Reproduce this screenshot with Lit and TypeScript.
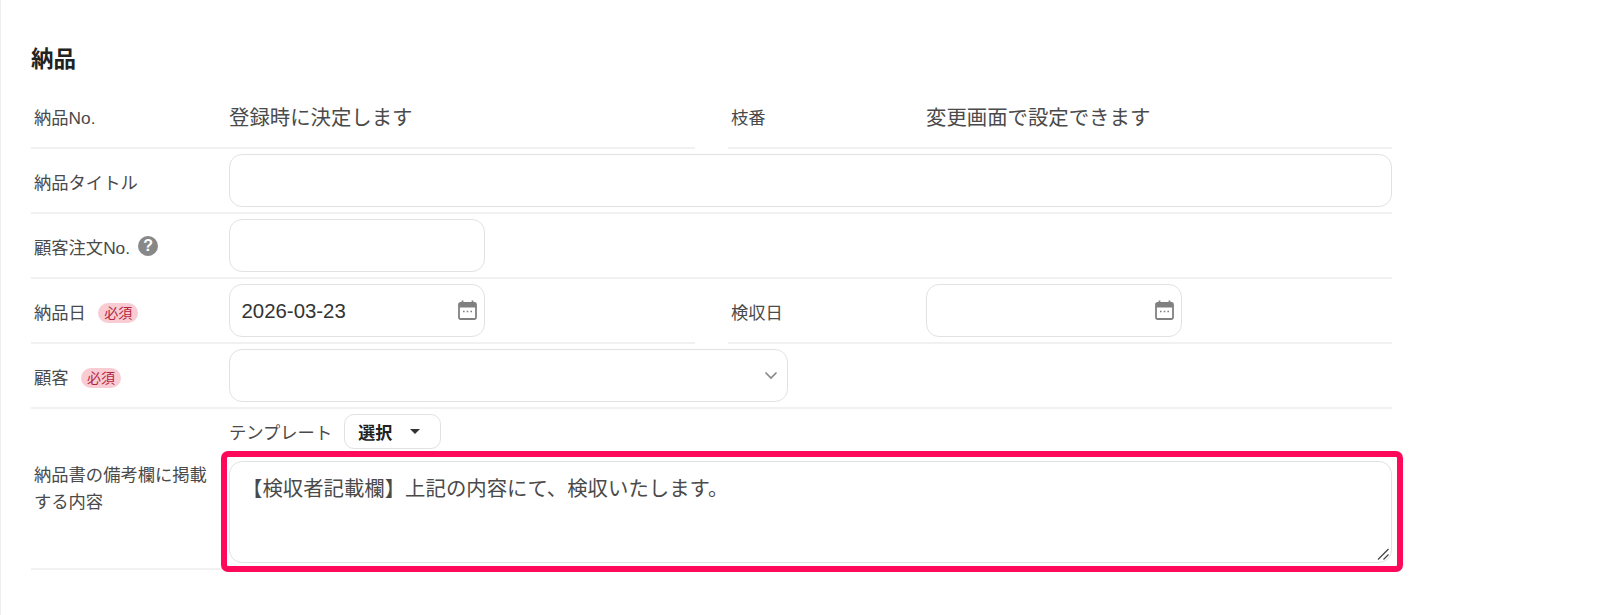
import { LitElement, html, css, svg } from "lit";
import { customElement } from "lit/decorators.js";

const calendar = svg`<svg class="cal" viewBox="0 0 19 20" width="19" height="20" fill="none"><path d="M4.5 0.5v3M14.5 0.5v3" stroke="#808080" stroke-width="1.8"/><rect x="1" y="3" width="17" height="16" rx="1.5" stroke="#808080" stroke-width="1.8"/><rect x="1" y="3" width="17" height="4.5" fill="#808080"/><path d="M5 11.5h1.6M8.7 11.5h1.6M12.4 11.5h1.6" stroke="#808080" stroke-width="1.5"/></svg>`;

@customElement("app-root")
export class AppRoot extends LitElement {
  static styles = css`
    :host {
      display: block;
      height: 615px;
      box-sizing: border-box;
      background: #fff;
      border-left: 1px solid #efefef;
      padding: 42px 0 0 30px;
      font-family: "Liberation Sans", "Noto Sans CJK JP", sans-serif;
      color: #333;
      overflow: hidden;
    }
    .form { width: 1361px; position: relative; }
    h2 {
      margin: 0;
      height: 42px;
      font-size: 22.5px;
      line-height: 36px;
      font-weight: 700;
      color: #222;
    }
    .row { display: flex; gap: 33px; }
    .cell {
      flex: 1 1 0;
      display: flex;
      align-items: center;
      box-sizing: border-box;
      height: 65px;
      border-bottom: 2px solid #f1f1f1;
      min-width: 0;
      padding-bottom: 1px;
    }
    .label {
      flex: 0 0 198px;
      box-sizing: border-box;
      padding: 6px 0 0 3px;
      display: flex;
      align-items: center;
      font-size: 17.3px;
      line-height: 27px;
      color: #4a4a4a;
    }
    .label.long { padding-top: 0; padding-right: 10px; display: block; }
    .value { font-size: 20.4px; padding-top: 2px; color: #4a4a4a; }
    .field {
      box-sizing: border-box;
      height: 53px;
      border: 1.5px solid #e2e2e2;
      border-radius: 13px;
      background: #fff;
      display: flex;
      align-items: center;
      justify-content: space-between;
      padding: 0 7px 0 11.5px;
      font-size: 20.4px;
      color: #333;
    }
    .field .date { padding-top: 2px; }
    .sm { width: 256px; }
    .full { flex: 1; }
    .wide { width: 559px; padding-right: 9px; }
    .chev { margin-top: 0; }
    .badge {
      margin-left: 12.5px;
      width: 40px;
      height: 20px;
      border-radius: 10px;
      background: #f9ccd3;
      color: #b3263f;
      font-size: 14px;
      line-height: 20px;
      text-align: center;
    }
    .help {
      margin: -5px 0 0 8px;
      width: 20px;
      height: 20px;
      border-radius: 50%;
      background: #888;
      color: #fff;
      font-size: 16px;
      font-weight: 700;
      line-height: 20px;
      text-align: center;
    }
    .last { height: 161px; padding-bottom: 0; align-items: stretch; }
    .last .label { align-items: center; display: flex; }
    .stack { flex: 1; display: flex; flex-direction: column; padding-top: 4px; position: relative; }
    .tpl {
      height: 36px;
      display: flex;
      align-items: center;
      gap: 12px;
      font-size: 17.3px;
      color: #4a4a4a;
    }
    .btn {
      box-sizing: border-box;
      width: 97px;
      height: 35px;
      border: 1.5px solid #e2e2e2;
      border-radius: 10px;
      display: flex;
      align-items: center;
      padding-left: 13px;
      font-weight: 700;
      font-size: 17px;
      color: #222;
      gap: 18px;
    }
    .caret {
      width: 0;
      height: 0;
      border-left: 5px solid transparent;
      border-right: 5px solid transparent;
      border-top: 5px solid #333;
    }
    textarea {
      display: block;
      box-sizing: border-box;
      width: 100%;
      height: 102px;
      margin-top: 12px;
      border: 1.5px solid #e2e2e2;
      border-radius: 13px;
      padding: 13px 12px;
      font: 20.4px/1.4 "Liberation Sans", "Noto Sans CJK JP", sans-serif;
      color: #4a4a4a;
      outline: none;
      background: #fff;
      resize: none;
    }
    .grip { position: absolute; right: 3px; bottom: 8px; }
    .mark {
      position: absolute;
      left: 190px;
      top: 409px;
      width: 1182px;
      height: 121px;
      box-sizing: border-box;
      border: 6px solid #ff0a5a;
      border-radius: 7px;
      pointer-events: none;
    }
  `;

  render() {
    return html`
      <div class="form">
        <h2>納品</h2>
        <div class="row">
          <div class="cell"><div class="label">納品No.</div><div class="value">登録時に決定します</div></div>
          <div class="cell"><div class="label">枝番</div><div class="value">変更画面で設定できます</div></div>
        </div>
        <div class="row">
          <div class="cell"><div class="label">納品タイトル</div><div class="field full"></div></div>
        </div>
        <div class="row">
          <div class="cell"><div class="label">顧客注文No.<span class="help">?</span></div><div class="field sm"></div></div>
        </div>
        <div class="row">
          <div class="cell"><div class="label">納品日<span class="badge">必須</span></div><div class="field sm"><span class="date">2026-03-23</span>${calendar}</div></div>
          <div class="cell"><div class="label">検収日</div><div class="field sm"><span></span>${calendar}</div></div>
        </div>
        <div class="row">
          <div class="cell"><div class="label">顧客<span class="badge">必須</span></div>
            <div class="field wide"><span></span><svg class="chev" width="14" height="9" viewBox="0 0 14 9" fill="none"><path d="M1.5 1.5l5.5 5.5 5.5-5.5" stroke="#888" stroke-width="1.7"/></svg></div></div>
        </div>
        <div class="row">
          <div class="cell last">
            <div class="label long">納品書の備考欄に掲載する内容</div>
            <div class="stack">
              <div class="tpl">テンプレート<div class="btn">選択<span class="caret"></span></div></div>
              <textarea .value=${"【検収者記載欄】上記の内容にて、検収いたします。"}></textarea>
              <svg class="grip" width="12" height="12" viewBox="0 0 12 12" fill="none"><path d="M1 11.5L11.5 1M6.5 11.5L11.5 6.5" stroke="#444" stroke-width="1.2"/></svg>
            </div>
          </div>
        </div>
        <div class="mark"></div>
      </div>
    `;
  }
}
